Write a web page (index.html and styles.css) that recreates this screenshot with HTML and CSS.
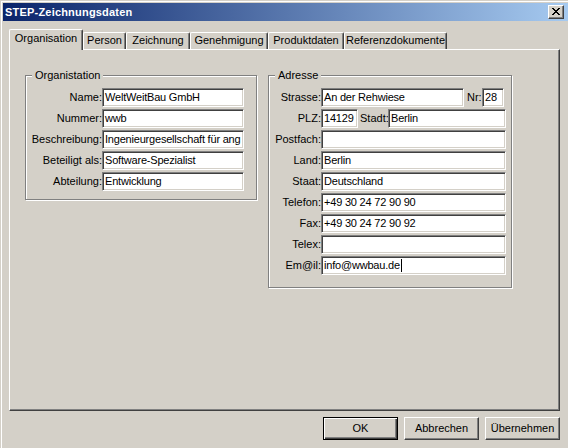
FILE: index.html
```html
<!DOCTYPE html>
<html lang="de">
<head>
<meta charset="utf-8">
<title>STEP-Zeichnungsdaten</title>
<link rel="stylesheet" href="styles.css">
</head>
<body>
<div class="window">
  <div class="titlebar">
    <span class="title">STEP-Zeichnungsdaten</span>
    <div class="close">
      <svg width="8" height="7" viewBox="0 0 8 7" shape-rendering="crispEdges"><path fill="#000" d="M0 0h2v1H0z M6 0h2v1H6z M1 1h2v1H1z M5 1h2v1H5z M2 2h4v1H2z M3 3h2v1H3z M2 4h4v1H2z M1 5h2v1H1z M5 5h2v1H5z M0 6h2v1H0z M6 6h2v1H6z"/></svg>
    </div>
  </div>
  <div class="content">
    <div class="tabs">
      <div class="tab active t-org">Organisation</div>
      <div class="tab t-person">Person</div>
      <div class="tab t-zeich">Zeichnung</div>
      <div class="tab t-genehm">Genehmigung</div>
      <div class="tab t-produkt">Produktdaten</div>
      <div class="tab t-ref">Referenzdokumente</div>
    </div>
    <div class="panel">
      <div class="group org">
        <span class="legend">Organistation</span>
        <div class="form org-form">
          <span class="lbl">Name:</span><div class="field">WeltWeitBau GmbH</div>
          <span class="lbl">Nummer:</span><div class="field">wwb</div>
          <span class="lbl">Beschreibung:</span><div class="field">Ingenieurgesellschaft für ang</div>
          <span class="lbl">Beteiligt als:</span><div class="field">Software-Spezialist</div>
          <span class="lbl">Abteilung:</span><div class="field">Entwicklung</div>
        </div>
      </div>
      <div class="group adr">
        <span class="legend">Adresse</span>
        <div class="form adr-form">
          <span class="lbl">Strasse:</span>
          <div class="row"><div class="field grow">An der Rehwiese</div><span class="inl nr-l">Nr:</span><div class="field nr-f">28</div></div>
          <span class="lbl">PLZ:</span>
          <div class="row"><div class="field plz">14129</div><span class="inl stadt-l">Stadt:</span><div class="field grow">Berlin</div></div>
          <span class="lbl">Postfach:</span><div class="field"></div>
          <span class="lbl">Land:</span><div class="field">Berlin</div>
          <span class="lbl">Staat:</span><div class="field">Deutschland</div>
          <span class="lbl">Telefon:</span><div class="field">+49 30 24 72 90 90</div>
          <span class="lbl">Fax:</span><div class="field">+49 30 24 72 90 92</div>
          <span class="lbl">Telex:</span><div class="field"></div>
          <span class="lbl">Em@il:</span><div class="field">info@wwbau.de<span class="caret"></span></div>
        </div>
      </div>
    </div>
    <div class="buttons">
      <div class="btn default">OK</div>
      <div class="btn">Abbrechen</div>
      <div class="btn">Übernehmen</div>
    </div>
  </div>
</div>
</body>
</html>
```
FILE: styles.css
```css
html, body {
  margin: 0;
  padding: 0;
  background: #d4d0c8;
  overflow: hidden;
}

.window {
  width: 568px;
  height: 448px;
  box-sizing: border-box;
  padding: 3px 0 0 3px;
  background: #d4d0c8;
  box-shadow: inset 1px 1px 0 #d4d0c8, inset 2px 2px 0 #fff;
  font-family: "Liberation Sans", Arial, sans-serif;
  font-size: 11px;
  line-height: 13px;
  color: #000;
}

.titlebar {
  height: 18px;
  display: flex;
  align-items: center;
  justify-content: space-between;
  padding: 0 4px 0 2px;
  background: linear-gradient(to right, #0a246a, #a6caf0);
}

.title {
  color: #fff;
  font-weight: bold;
  font-size: 11px;
  letter-spacing: 0.2px;
}

.close {
  width: 16px;
  height: 14px;
  box-sizing: border-box;
  display: flex;
  align-items: center;
  justify-content: center;
  background: #d4d0c8;
  border: 1px solid;
  border-color: #fff #404040 #404040 #fff;
  box-shadow: inset -1px -1px 0 #808080;
  padding: 0 1px 1px 0;
}

.close svg {
  display: block;
}

.content {
  padding-left: 6px;
}

.tabs {
  height: 28px;
  display: flex;
  align-items: flex-end;
}

.tab {
  box-sizing: border-box;
  height: 17px;
  padding-top: 1px;
  text-align: center;
  white-space: nowrap;
  border-top: 1px solid #fff;
  border-left: 1px solid #fff;
  border-right: 1px solid #404040;
  box-shadow: inset -1px 0 0 #808080;
  border-radius: 2px 2px 0 0;
  background: #d4d0c8;
}

.tab.active {
  height: 21px;
  margin-bottom: -1px;
  position: relative;
  z-index: 1;
  padding-top: 2px;
}

.t-org { width: 74px; }
.t-person { width: 43px; }
.t-zeich { width: 64px; }
.t-genehm { width: 78px; }
.t-produkt { width: 76px; }
.t-ref { width: 103px; }

.panel {
  width: 551px;
  height: 362px;
  box-sizing: border-box;
  border: 1px solid;
  border-color: #fff #404040 #404040 #fff;
  box-shadow: inset -1px -1px 0 #808080;
  display: flex;
  align-items: flex-start;
  gap: 11px;
  padding: 25px 0 0 15px;
}

.group {
  position: relative;
  border: 1px solid #808080;
  box-shadow: inset 1px 1px 0 #fff, 1px 1px 0 #fff;
}

.legend {
  position: absolute;
  top: -7px;
  left: 6px;
  padding: 0 3px 0 3px;
  background: #d4d0c8;
  line-height: 13px;
}

.form {
  display: grid;
  row-gap: 2px;
  align-items: center;
}

.org .form {
  grid-template-columns: 76px 142px;
  padding: 12px 12px 8px 0;
}

.adr .form {
  grid-template-columns: 52px 185px;
  padding: 12px 5px 12px 0;
}

.lbl {
  text-align: right;
  white-space: nowrap;
}

.field {
  height: 19px;
  box-sizing: border-box;
  background: #fff;
  border: 1px solid;
  border-color: #808080 #fff #fff #808080;
  box-shadow: inset 1px 1px 0 #404040, inset -1px -1px 0 #d4d0c8;
  padding: 2px 1px 0 2px;
  white-space: nowrap;
  overflow: hidden;
  letter-spacing: -0.2px;
}

.row {
  display: flex;
  align-items: center;
}

.row .grow {
  flex: 1;
}

.inl {
  white-space: nowrap;
  flex: none;
}

.nr-l {
  margin-left: 3px;
  width: 14px;
}

.nr-f {
  width: 22px;
  margin-left: 1px;
  margin-right: 2px;
  flex: none;
}

.plz {
  width: 37px;
  flex: none;
}

.stadt-l {
  margin-left: 2px;
  width: 28px;
}

.caret {
  display: inline-block;
  width: 1px;
  height: 13px;
  background: #000;
  vertical-align: top;
  margin-left: 1px;
}

.buttons {
  width: 551px;
  margin-top: 6px;
  display: flex;
  justify-content: flex-end;
  gap: 6px;
}

.btn {
  width: 75px;
  height: 23px;
  box-sizing: border-box;
  display: flex;
  align-items: center;
  justify-content: center;
  border: 1px solid;
  border-color: #fff #404040 #404040 #fff;
  box-shadow: inset -1px -1px 0 #808080;
  background: #d4d0c8;
}

.btn.default {
  border-color: #000;
  box-shadow: inset 1px 1px 0 #fff, inset -1px -1px 0 #404040, inset -2px -2px 0 #808080;
}
```
